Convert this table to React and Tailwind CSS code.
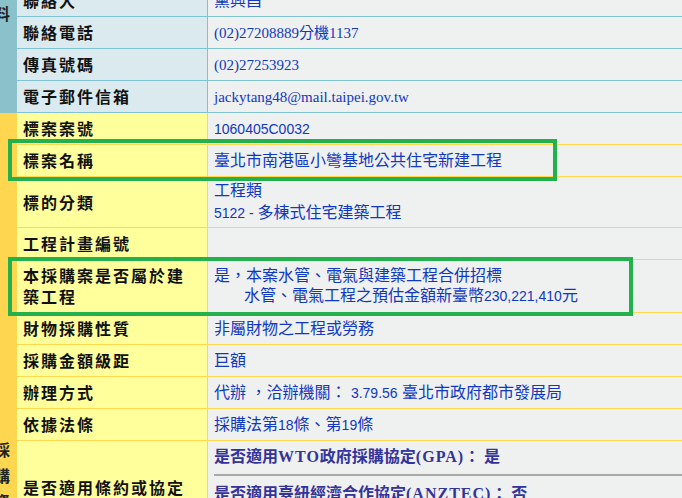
import React from 'react';

const TEAL = {
  side: 'bg-[#8bc1cb]',
  label: 'bg-[#daeaee]',
  border: 'border-[#7fc4d0]'
};

const YELLOW = {
  side: 'bg-[#ffd650]',
  label: 'bg-[#ffff9c]',
  border: 'border-[#ffd84f]'
};

const sans = { fontFamily: '"Liberation Sans", "Noto Sans CJK TC", sans-serif' };
const serif = { fontFamily: '"Liberation Serif", "Noto Sans CJK TC", serif' };

// narrow latin runs inside the CJK values
const N = ({ children }) => <span className="text-[14px]">{children}</span>;

const Row = ({ tone, label, h = 'h-[31px]', children }) => (
  <div className={`flex border-b ${tone.border}`}>
    <div
      className={`w-[191px] shrink-0 ${h} flex items-center pl-[6px] pr-1 border-r ${tone.border} ${tone.label} font-bold text-[16px] leading-[21px] tracking-[2px] text-[#111]`}
      style={{ fontFamily: '"Noto Sans CJK TC", sans-serif' }}
    >
      <div>{label}</div>
    </div>
    <div className="flex-1 flex items-center pl-[6px] text-[16px] leading-[21px] text-[#1038c0]" style={sans}>
      <div>{children}</div>
    </div>
  </div>
);

const Section = ({ tone, sideText, sideClass, children }) => (
  <div className="flex">
    <div className={`w-[17px] shrink-0 overflow-hidden ${tone.side}`}>
      <div
        className={`-ml-[6px] w-[16px] font-bold text-[16px] leading-[26px] text-[#222] ${sideClass}`}
        style={{ fontFamily: '"Noto Sans CJK TC", sans-serif' }}
      >
        {sideText.split('').map((c, i) => (
          <div key={i}>{c}</div>
        ))}
      </div>
    </div>
    <div className="flex-1 flex flex-col">{children}</div>
  </div>
);

const App = () => {
  return (
    <div className="relative w-[682px] h-[498px] overflow-hidden bg-[#eff0f0]">
      <div className="-mt-[15px]">
        {/* 機關資料 */}
        <Section tone={TEAL} sideText="機關資料" sideClass="-mt-[63px]">
          <Row tone={TEAL} label="聯絡人">黨興昌</Row>
          <Row tone={TEAL} label="聯絡電話">
            <span className="text-[15px]" style={serif}>(02)27208889分機1137</span>
          </Row>
          <Row tone={TEAL} label="傳真號碼">
            <span className="text-[15px]" style={serif}>(02)27253923</span>
          </Row>
          <Row tone={TEAL} label="電子郵件信箱">
            <span className="text-[15px]" style={serif}>jackytang48@mail.taipei.gov.tw</span>
          </Row>
        </Section>

        {/* 採購資料 */}
        <Section tone={YELLOW} sideText="採購資料" sideClass="pt-[323px]">
          <Row tone={YELLOW} label="標案案號">
            <N>1060405C0032</N>
          </Row>
          <Row tone={YELLOW} label="標案名稱">臺北市南港區小彎基地公共住宅新建工程</Row>
          <Row tone={YELLOW} label="標的分類" h="h-[50px]">
            <div className="leading-[22px]">工程類</div>
            <div className="leading-[22px]">
              <N>5122 - </N>多棟式住宅建築工程
            </div>
          </Row>
          <Row tone={YELLOW} label="工程計畫編號" />
          <Row
            tone={YELLOW}
            h="h-[52px]"
            label={
              <>
                本採購案是否屬於建
                <br />
                築工程
              </>
            }
          >
            <div className="leading-[20px]">是，本案水管、電氣與建築工程合併招標</div>
            <div className="leading-[20px] pl-[30px]">
              水管、電氣工程之預估金額新臺幣<N>230,221,410</N>元
            </div>
          </Row>
          <Row tone={YELLOW} label="財物採購性質">非屬財物之工程或勞務</Row>
          <Row tone={YELLOW} label="採購金額級距">巨額</Row>
          <Row tone={YELLOW} label="辦理方式">
            代辦 ，洽辦機關： <N>3.79.56</N> 臺北市政府都市發展局
          </Row>
          <Row tone={YELLOW} label="依據法條">
            採購法第<N>18</N>條、第<N>19</N>條
          </Row>
          <div className={`flex border-b ${YELLOW.border}`}>
            <div
              className={`w-[191px] shrink-0 h-[92px] flex items-center pl-[6px] border-r ${YELLOW.border} ${YELLOW.label} font-bold text-[16px] tracking-[2px] text-[#111]`}
              style={{ fontFamily: '"Noto Sans CJK TC", sans-serif' }}
            >
              是否適用條約或協定
            </div>
            <div className="flex-1 flex flex-col pl-[6px] pt-[6px] text-[16px] leading-[20px] font-bold text-[#33339a]" style={serif}>
              <div>
                是否適用<span className="tracking-[1px]">WTO</span>政府採購協定
                <span className="tracking-[1px]">(GPA)</span>： 是
              </div>
              <div className="mt-[7px] border-t-2 border-[#a8a8a8]" />
              <div className="mt-[8px]">
                是否適用臺紐經濟合作協定<span className="tracking-[1px]">(ANZTEC)</span>： 否
              </div>
            </div>
          </div>
        </Section>
      </div>

      {/* green annotation boxes */}
      <div className="absolute left-[8px] top-[139px] w-[549px] h-[42px] border-4 border-[#22b14c]" />
      <div className="absolute left-[8px] top-[257px] w-[625px] h-[59px] border-4 border-[#22b14c]" />
    </div>
  );
};

export default App;
